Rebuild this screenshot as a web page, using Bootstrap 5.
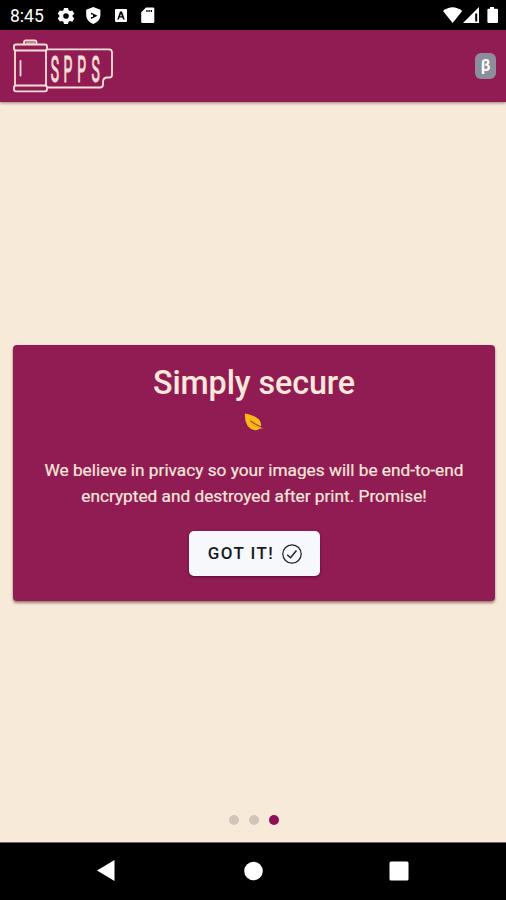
<!DOCTYPE html>
<html lang="en">
<head>
<meta charset="utf-8">
<meta name="viewport" content="width=device-width, initial-scale=1">
<title>SPPS</title>
<link href="https://cdn.jsdelivr.net/npm/bootstrap@5.3.0/dist/css/bootstrap.min.css" rel="stylesheet">
<style>
body{font-family:Roboto,sans-serif;background:#f8ead8;color:#fbe8da}
.screen{height:900px;width:100%;overflow:hidden}
.status-strip{height:30px;background:#000;color:#fff;padding:2px 8px 0 10px;font-size:17.5px;line-height:28px}
.clock{width:47px}
.app-header{height:72px;background:#911c54;box-shadow:0 1px 3px rgba(60,20,20,.5);padding:0 10px 0 10px}
.beta{width:21px;height:26px;border-radius:6px;background:#8d8e9c;color:#fff;font-size:16px;line-height:25px;font-weight:700}
.promo{width:482px;height:256px;margin:243px 0 0 13px;background:#911c54;border-radius:4px;box-shadow:0 2px 3px rgba(60,30,30,.55)}
.promo h1{font-size:32.3px;line-height:40px;font-weight:500;margin:18px 0 0;letter-spacing:-.1px}
.leaf{height:20px;margin-top:9px;margin-bottom:25px}
.promo p{font-size:17.25px;line-height:26px;margin:0 0 22px;white-space:nowrap;-webkit-text-stroke:.2px #fbe8da}
.got-it{width:131px;height:45px;border-radius:5px;background:#f6f8fc;color:#16181b;font-size:17px;font-weight:500;letter-spacing:1.4px;box-shadow:0 1px 3px rgba(40,0,20,.55);padding:0 0 0 2px}
.got-it:hover{background:#fff;color:#16181b}
.pager{height:10px;gap:9.7px;margin-top:214px;padding-left:2px}
.pip{width:10px;height:10px;background:#d0c5b8}
.pip-on{background:#8e0f54}
.system-nav{height:58px;background:#000;border-top:1px solid #6f685f}
svg{display:block;flex-shrink:0}
</style>
</head>
<body>
<div class="screen d-flex flex-column">
  <div class="status-strip d-flex flex-shrink-0">
    <span class="clock">8:45</span>
    <svg width="110" height="28" viewBox="57 2 110 28" fill="#fff">
      <path fill-rule="evenodd" d="M64 8h4l.6 2.3 1.4.8 2.3-.7 2 3.3-1.7 1.6v1.4l1.7 1.7-2 3.3-2.3-.7-1.4.8L68 24h-4l-.6-2.3-1.4-.8-2.3.7-2-3.3 1.7-1.6v-1.4l-1.7-1.6 2-3.3 2.3.7 1.4-.8zM66 13.200a2.800 2.800 0 1 0 0 5.600a2.800 2.800 0 0 0 0-5.600z"/>
      <path fill-rule="evenodd" d="M93.300 7l7.100 2.800v5.200c0 4.200-2.800 7.500-7.100 9c-4.300-1.500-7.100-4.800-7.100-9V9.800zM91 12.500v6.500l6.500-3.300z"/>
      <path d="M90.500 14.500h2.500v2.500h-2.500z"/>
      <path fill-rule="evenodd" d="M116 9h10q1 0 1 1v11q0 1-1 1h-10q-1 0-1-1V10q0-1 1-1zM120 11.500l-2.800 8h1.700l.6-1.900h3l.6 1.900h1.700l-2.800-8zm1 2.200l.9 2.500h-1.800z"/>
      <path fill-rule="evenodd" d="M146 7.500h7q1.300 0 1.300 1.300v12.900q0 1.300-1.300 1.300h-10.500q-1.300 0-1.300-1.300V12.300zM146.300 10h1.300v2h-1.300zm2.200 0h1.300v2h-1.300zm2.200 0h1.300v2h-1.300z"/>
    </svg>
    <svg class="ms-auto" width="58" height="28" viewBox="440 2 58 28" fill="#fff">
      <path d="M443 11q9.600-7.500 19.200 0L452.600 23z"/>
      <path fill-rule="evenodd" d="M479 7v16h-16zM475.200 13.500h2v8h-2z"/>
      <path d="M490 7h4v1.700h3q1 0 1 1V22q0 1-1 1h-8.600q-1 0-1-1V9.700q0-1 1-1H490z"/>
    </svg>
  </div>
  <header class="app-header d-flex align-items-center flex-shrink-0">
    <svg width="106" height="60" viewBox="10 36 106 60" fill="none" stroke="#fbe0d5" stroke-width="1.800" stroke-linejoin="round" stroke-linecap="round" role="img">
      <path d="M24 44v-1.500q0-2 2-2h8.500q2 0 2 2V44"/>
      <path d="M26.500 43h8" stroke="#c48792"/>
      <rect x="14" y="44.500" width="33" height="6" rx="2"/>
      <rect x="14" y="85.500" width="33" height="5.800" rx="2"/>
      <path d="M15 50.500v35M46 50.500v35M20.500 61v14.500M47.500 49.300h61.500q3 0 3 3v22.700q0 2.500-2.500 2.500h-2q-4.500 0-4.500 4.500v2.500q0 3-3 3H47.500"/>
      <g fill="#fbe0d5" stroke="#fbe0d5" stroke-width="1.100" font-family="Roboto, sans-serif" font-size="37.500">
        <text transform="translate(50.800 82.200) scale(.37 1)">S</text>
        <text transform="translate(63.500 82.200) scale(.37 1)">P</text>
        <text transform="translate(77.200 82.200) scale(.37 1)">P</text>
        <text transform="translate(91.500 82.200) scale(.37 1)">S</text>
      </g>
    </svg>
    <span class="beta badge ms-auto p-0">β</span>
  </header>
  <main class="flex-shrink-0">
    <section class="promo d-flex flex-column align-items-center text-center">
      <h1>Simply secure</h1>
      <svg class="leaf" width="22" viewBox="243 412 22 20">
        <path d="M245 413.500q4.500.8 8.500 2.500q5.500 2.200 7 6q1 3 .2 5.200l2.300 1.200-3 .2q-2 1.700-5 1.600q-11-2-10-16.700z" fill="#fcba19"/>
        <path d="M250 419l3 6.500 6 1.800M252.500 421l6 5" stroke="#ef9210" stroke-width=".7" fill="none"/>
        <path d="M250.500 421q4 3.500 12.300 6.500" stroke="#7b372b" stroke-width="1" fill="none"/>
      </svg>
      <p>We believe in privacy so your images will be end-to-end<br>encrypted and destroyed after print. Promise!</p>
      <button type="button" class="got-it btn border-0 d-flex align-items-center justify-content-center gap-2">GOT IT!
        <svg width="20" height="20" viewBox="0 0 20 20" fill="none" stroke="#202327" stroke-width="1.250"><circle cx="10" cy="10" r="9.200"/><path d="M5.200 10.700l3.300 3 6-7.200" stroke-width="1.500"/></svg>
      </button>
    </section>
    <div class="pager d-flex justify-content-center">
      <span class="pip rounded-circle"></span><span class="pip rounded-circle"></span><span class="pip pip-on rounded-circle"></span>
    </div>
  </main>
  <nav class="system-nav mt-auto flex-shrink-0">
    <svg width="506" height="57" viewBox="0 843 506 57" fill="#fff">
      <path d="M97 870.500l17.500-10.500v21z"/><circle cx="253.500" cy="871" r="9.300"/><rect x="389.500" y="861.500" width="19" height="19" rx="1.500"/>
    </svg>
  </nav>
</div>
<script src="https://cdn.jsdelivr.net/npm/bootstrap@5.3.0/dist/js/bootstrap.bundle.min.js"></script>
</body>
</html>
